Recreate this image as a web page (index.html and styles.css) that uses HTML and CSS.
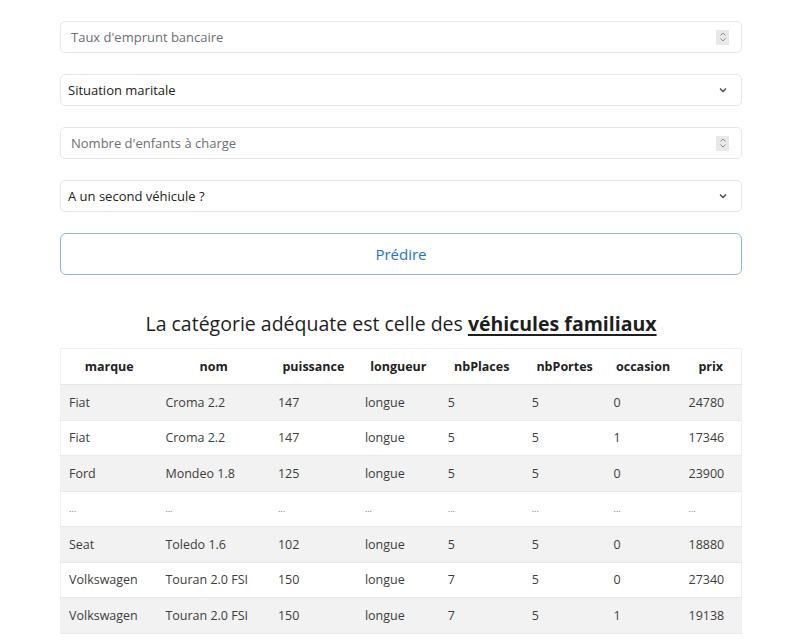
FILE: index.html
```html
<!DOCTYPE html>
<html lang="fr">
<head>
<meta charset="utf-8">
<title>Prédiction</title>
<link rel="stylesheet" href="styles.css">
</head>
<body>
<main class="page">
  <form class="form">
    <div class="field num">
      <span class="placeholder">Taux d'emprunt bancaire</span>
      <span class="spin"><svg width="10" height="12" viewBox="0 0 10 12"><path d="M2.5 4.5 L5 2 L7.5 4.5 M2.5 7.5 L5 10 L7.5 7.5" fill="none" stroke="#8a8a8a" stroke-width="1"/></svg></span>
    </div>
    <div class="field sel">
      <span class="value">Situation maritale</span>
      <svg class="chev" width="10" height="8" viewBox="0 0 10 8"><path d="M2 2.5 L5 5.5 L8 2.5" fill="none" stroke="#444" stroke-width="1.3"/></svg>
    </div>
    <div class="field num">
      <span class="placeholder">Nombre d'enfants à charge</span>
      <span class="spin"><svg width="10" height="12" viewBox="0 0 10 12"><path d="M2.5 4.5 L5 2 L7.5 4.5 M2.5 7.5 L5 10 L7.5 7.5" fill="none" stroke="#8a8a8a" stroke-width="1"/></svg></span>
    </div>
    <div class="field sel">
      <span class="value">A un second véhicule ?</span>
      <svg class="chev" width="10" height="8" viewBox="0 0 10 8"><path d="M2 2.5 L5 5.5 L8 2.5" fill="none" stroke="#444" stroke-width="1.3"/></svg>
    </div>
    <button type="button" class="predict">Prédire</button>
  </form>

  <h2 class="result">La catégorie adéquate est celle des <strong>véhicules familiaux</strong></h2>

  <table class="cars">
    <thead>
      <tr><th>marque</th><th>nom</th><th>puissance</th><th>longueur</th><th>nbPlaces</th><th>nbPortes</th><th>occasion</th><th>prix</th></tr>
    </thead>
    <tbody>
      <tr><td>Fiat</td><td>Croma 2.2</td><td>147</td><td>longue</td><td>5</td><td>5</td><td>0</td><td>24780</td></tr>
      <tr><td>Fiat</td><td>Croma 2.2</td><td>147</td><td>longue</td><td>5</td><td>5</td><td>1</td><td>17346</td></tr>
      <tr><td>Ford</td><td>Mondeo 1.8</td><td>125</td><td>longue</td><td>5</td><td>5</td><td>0</td><td>23900</td></tr>
      <tr class="dots"><td>...</td><td>...</td><td>...</td><td>...</td><td>...</td><td>...</td><td>...</td><td>...</td></tr>
      <tr><td>Seat</td><td>Toledo 1.6</td><td>102</td><td>longue</td><td>5</td><td>5</td><td>0</td><td>18880</td></tr>
      <tr><td>Volkswagen</td><td>Touran 2.0 FSI</td><td>150</td><td>longue</td><td>7</td><td>5</td><td>0</td><td>27340</td></tr>
      <tr><td>Volkswagen</td><td>Touran 2.0 FSI</td><td>150</td><td>longue</td><td>7</td><td>5</td><td>1</td><td>19138</td></tr>
    </tbody>
  </table>
</main>
</body>
</html>
```

FILE: styles.css
```css
* { box-sizing: border-box; }
html, body { margin: 0; padding: 0; background: #fff; }
body {
  font-family: "Open Sans", "Noto Sans", "Liberation Sans", sans-serif;
  color: #212529;
}
.page {
  width: 682px;
  margin-left: 60px;
  padding-top: 21px;
}
.form {
  display: flex;
  flex-direction: column;
  gap: 21px;
}
.field {
  height: 32px;
  border: 1px solid #e6e7e9;
  border-radius: 5px;
  display: flex;
  align-items: center;
  justify-content: space-between;
  font-size: 13px;
}
.field.num { padding: 0 12px 0 10px; }
.field.sel { padding: 0 13px 0 7px; }
.placeholder { color: #6c6f73; }
.value { color: #222; }
.spin {
  width: 13px;
  height: 15px;
  background: #e8e8ea;
  display: flex;
  align-items: center;
  justify-content: center;
}
.chev { display: block; }
.predict {
  height: 42px;
  border: 1px solid #8fb4dc;
  border-radius: 6px;
  background: #fff;
  color: #1a73d9;
  font-family: inherit;
  font-size: 15px;
  padding: 0;
}
.result {
  margin: 0;
  padding-top: 37px;
  height: 73px;
  text-align: center;
  font-size: 19.5px;
  font-weight: 400;
  line-height: 24px;
  color: #1e1e1e;
}
.result strong {
  font-weight: 700;
  text-decoration: underline;
  text-underline-offset: 3px;
  text-decoration-thickness: 2px;
}
.cars {
  width: 682px;
  border-collapse: collapse;
  font-size: 12.5px;
  border: 1px solid #f0f0f0;
}
.cars th {
  height: 36px;
  font-weight: 700;
  text-align: center;
  color: #222;
  padding: 0 8px;
  border-bottom: 1px solid #e5e5e5;
}
.cars td {
  height: 35.5px;
  padding: 0 8px;
  text-align: left;
  color: #3d3d3d;
  border-bottom: 1px solid #e9e9e9;
}
.cars tbody tr:nth-child(odd) td { background: #f2f2f2; }
.cars tr.dots td { font-size: 9px; color: #777; }
.cars th:nth-child(1) { width: 97px; }
.cars th:nth-child(2) { width: 113px; }
.cars th:nth-child(3) { width: 87px; }
.cars th:nth-child(4) { width: 83px; }
.cars th:nth-child(5) { width: 84px; }
.cars th:nth-child(6) { width: 82px; }
.cars th:nth-child(7) { width: 75px; }
.cars th:nth-child(8) { width: 61px; }
```
